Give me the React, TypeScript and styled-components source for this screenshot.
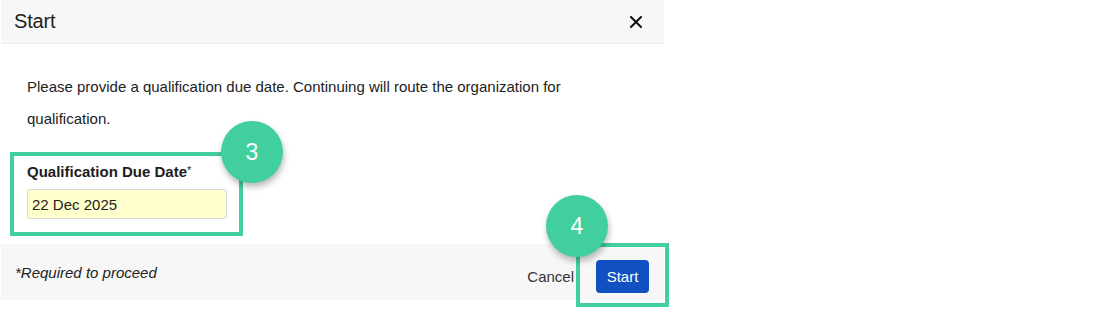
import styled, { createGlobalStyle } from "styled-components";

const GlobalStyle = createGlobalStyle`
  html, body {
    margin: 0;
    padding: 0;
    background: #ffffff;
    font-family: "Liberation Sans", Arial, sans-serif;
    color: #222222;
  }
  body {
    min-height: 100vh;
  }
`;

const accent = "#42cf9e";

const Dialog = styled.div`
  width: 663px;
  margin-left: 1px;
  padding-bottom: 21px;
  display: flex;
  flex-direction: column;
`;

const Header = styled.div`
  height: 43px;
  display: flex;
  align-items: center;
  justify-content: space-between;
  padding: 0 20px 0 13px;
  background: #f7f7f7;
  border-bottom: 1px solid #efefef;
`;

const Title = styled.h2`
  margin: 0;
  font-size: 20px;
  font-weight: 400;
  letter-spacing: -0.2px;
  color: #222222;
`;

const CloseButton = styled.button`
  border: none;
  background: none;
  padding: 0;
  width: 16px;
  height: 16px;
  display: flex;
  align-items: center;
  justify-content: center;
  cursor: pointer;
`;

const Body = styled.div`
  padding: 27px 26px 0 26px;
  height: 200px;
  box-sizing: border-box;
`;

const Intro = styled.p`
  margin: 0;
  font-size: 15px;
  line-height: 32px;
  color: #222222;
`;

const FieldGroup = styled.div`
  position: relative;
  margin-top: 28px;
  width: 200px;
`;

const Label = styled.label`
  display: block;
  font-size: 15px;
  font-weight: 700;
  color: #1d1d1d;
  line-height: 18px;
  sup {
    font-weight: 400;
    font-size: 11px;
    vertical-align: top;
    line-height: 14px;
  }
`;

const DateInput = styled.input`
  display: block;
  margin-top: 8px;
  width: 200px;
  height: 30px;
  box-sizing: border-box;
  padding: 0 4px;
  border: 1px solid #d9d9d9;
  border-radius: 3px;
  background: #ffffcc;
  font-family: "Liberation Sans", Arial, sans-serif;
  font-size: 15px;
  color: #222222;
  outline: none;
`;

const Frame = styled.div<{ $top: number; $left: number; $width: number; $height: number }>`
  position: absolute;
  top: ${({ $top }) => $top}px;
  left: ${({ $left }) => $left}px;
  width: ${({ $width }) => $width}px;
  height: ${({ $height }) => $height}px;
  border: 4px solid ${accent};
  box-sizing: border-box;
  pointer-events: none;
  z-index: 1;
`;

const Badge = styled.div<{ $top: number; $left: number }>`
  position: absolute;
  top: ${({ $top }) => $top}px;
  left: ${({ $left }) => $left}px;
  width: 62px;
  height: 62px;
  border-radius: 50%;
  background: ${accent};
  color: #ffffff;
  font-size: 23px;
  display: flex;
  align-items: center;
  justify-content: center;
  box-shadow: 1px 4px 6px rgba(0, 0, 0, 0.28);
  z-index: 2;
`;

const Footer = styled.div`
  height: 56px;
  display: flex;
  align-items: center;
  justify-content: space-between;
  padding: 0 15px 0 14px;
  background: #f7f7f7;
`;

const Required = styled.span`
  font-size: 15px;
  font-style: italic;
  color: #222222;
`;

const Actions = styled.div`
  display: flex;
  align-items: center;
  gap: 22px;
  margin-top: 9px;
`;

const CancelButton = styled.button`
  border: none;
  background: none;
  padding: 0;
  font-family: "Liberation Sans", Arial, sans-serif;
  font-size: 15px;
  color: #333333;
  cursor: pointer;
`;

const ButtonSpot = styled.div`
  position: relative;
`;

const PrimaryButton = styled.button`
  display: block;
  width: 53px;
  height: 33px;
  padding: 0;
  border: none;
  border-radius: 4px;
  background: #1150c1;
  color: #ffffff;
  font-family: "Liberation Sans", Arial, sans-serif;
  font-size: 15px;
  cursor: pointer;
`;

const App = () => {
  return (
    <>
      <GlobalStyle />
      <Dialog>
        <Header>
          <Title>Start</Title>
          <CloseButton aria-label="Close">
            <svg width="12" height="12" viewBox="0 0 12 12">
              <path d="M1 1L11 11M11 1L1 11" stroke="#111" strokeWidth="2" strokeLinecap="square" />
            </svg>
          </CloseButton>
        </Header>
        <Body>
          <Intro>
            Please provide a qualification due date. Continuing will route the organization for
            <br />
            qualification.
          </Intro>
          <FieldGroup>
            <Label>
              Qualification Due Date<sup>*</sup>
            </Label>
            <DateInput defaultValue="22 Dec 2025" />
            <Frame $top={-11} $left={-17} $width={233} $height={84} />
            <Badge $top={-42} $left={194}>3</Badge>
          </FieldGroup>
        </Body>
        <Footer>
          <Required>*Required to proceed</Required>
          <Actions>
            <CancelButton>Cancel</CancelButton>
            <ButtonSpot>
              <PrimaryButton>Start</PrimaryButton>
              <Frame $top={-17} $left={-20} $width={93} $height={64} />
              <Badge $top={-65} $left={-50}>4</Badge>
            </ButtonSpot>
          </Actions>
        </Footer>
      </Dialog>
    </>
  );
};

export default App;
